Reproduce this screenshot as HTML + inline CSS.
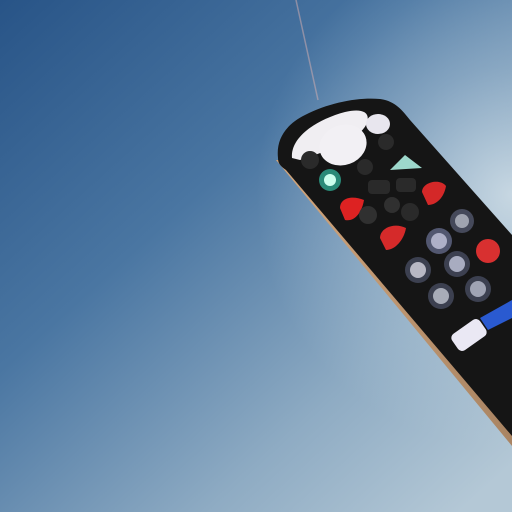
<!DOCTYPE html><html><head><style>html,body{margin:0;width:512px;height:512px;overflow:hidden}</style></head><body>
<svg width="512" height="512" viewBox="0 0 512 512" xmlns="http://www.w3.org/2000/svg">
<defs>
<linearGradient id="bg" x1="0" y1="0" x2="0.9" y2="1">
<stop offset="0" stop-color="#285487"/><stop offset="0.4" stop-color="#4a76a2"/><stop offset="0.75" stop-color="#8eabc3"/><stop offset="1" stop-color="#b4c8d6"/></linearGradient>
<radialGradient id="glow" cx="1" cy="0.38" r="0.5"><stop offset="0" stop-color="#dde8ee" stop-opacity="0.75"/><stop offset="0.5" stop-color="#c4d6e2" stop-opacity="0.35"/><stop offset="1" stop-color="#c4d6e2" stop-opacity="0"/></radialGradient>
<linearGradient id="side" x1="0" y1="0" x2="1" y2="-0.6"><stop offset="0" stop-color="#d2a67c"/><stop offset="1" stop-color="#4a3528"/></linearGradient>
</defs>
<rect width="512" height="512" fill="url(#bg)"/>
<rect width="512" height="512" fill="url(#glow)"/>
<line x1="296" y1="0" x2="318" y2="100" stroke="#d8b0b0" stroke-width="1.5" opacity="0.5"/>
<path d="M276,160 L512,446 L512,420 L290,160 Z" fill="url(#side)"/>
<path d="M278,158 C276,140 285,125 305,115 C330,102 360,97 380,99 C395,101 402,110 410,120 L512,235 L512,436 L286,170 C280,166 278,163 278,158 Z" fill="#151515"/>
<path d="M292,158 C290,138 315,120 345,112 C362,108 372,112 366,125 C358,140 330,150 300,160 Z" fill="#f0eef2"/>
<ellipse cx="343" cy="145" rx="24" ry="20" fill="#f2f0f4" transform="rotate(-20 343 145)"/>
<ellipse cx="378" cy="124" rx="12" ry="10" fill="#e8e6ee"/>
<circle cx="330" cy="180" r="11" fill="#2a8a78"/><circle cx="330" cy="180" r="6" fill="#cfe"/>
<path d="M390,170 L405,155 L422,168 Z" fill="#9dd8cc"/>
<path d="M340,208 C340,198 352,195 364,200 C362,212 355,222 345,220 Z" fill="#d22"/>
<path d="M422,192 C422,182 440,178 446,186 C444,198 436,205 428,205 Z" fill="#d42828"/>
<path d="M380,238 C380,228 394,222 406,228 C404,240 395,250 386,250 Z" fill="#d52a2a"/>
<circle cx="488" cy="251" r="12" fill="#d83030"/>
<circle cx="462" cy="221" r="12" fill="#45495a"/><circle cx="462" cy="221" r="7" fill="#a0a4b0"/>
<circle cx="439" cy="241" r="13" fill="#525770"/><circle cx="439" cy="241" r="8" fill="#aeb0c8"/>
<circle cx="418" cy="270" r="13" fill="#3c4050"/><circle cx="418" cy="270" r="8" fill="#b8b8c4"/>
<circle cx="457" cy="264" r="13" fill="#3c4050"/><circle cx="457" cy="264" r="8" fill="#a8acc0"/>
<circle cx="441" cy="296" r="13" fill="#3c4050"/><circle cx="441" cy="296" r="8" fill="#a8acb8"/>
<circle cx="478" cy="289" r="13" fill="#3c4050"/><circle cx="478" cy="289" r="8" fill="#a0a4b4"/>
<rect x="368" y="180" width="22" height="14" rx="4" fill="#2a2a2a"/>
<rect x="396" y="178" width="20" height="14" rx="4" fill="#2a2a2a"/>
<circle cx="392" cy="205" r="8" fill="#303030"/>
<circle cx="368" cy="215" r="9" fill="#303030"/>
<circle cx="310" cy="160" r="9" fill="#2a2a2a"/>
<circle cx="365" cy="167" r="8" fill="#2a2a2a"/>
<circle cx="386" cy="142" r="8" fill="#2a2a2a"/>
<circle cx="410" cy="212" r="9" fill="#2a2a2a"/>
<rect x="452" y="325" width="34" height="20" rx="5" fill="#eae8f4" transform="rotate(-35 469 335)"/>
<path d="M480,318 L512,300 L512,318 L488,330 Z" fill="#2a5ad0"/>
</svg>
</body></html>
